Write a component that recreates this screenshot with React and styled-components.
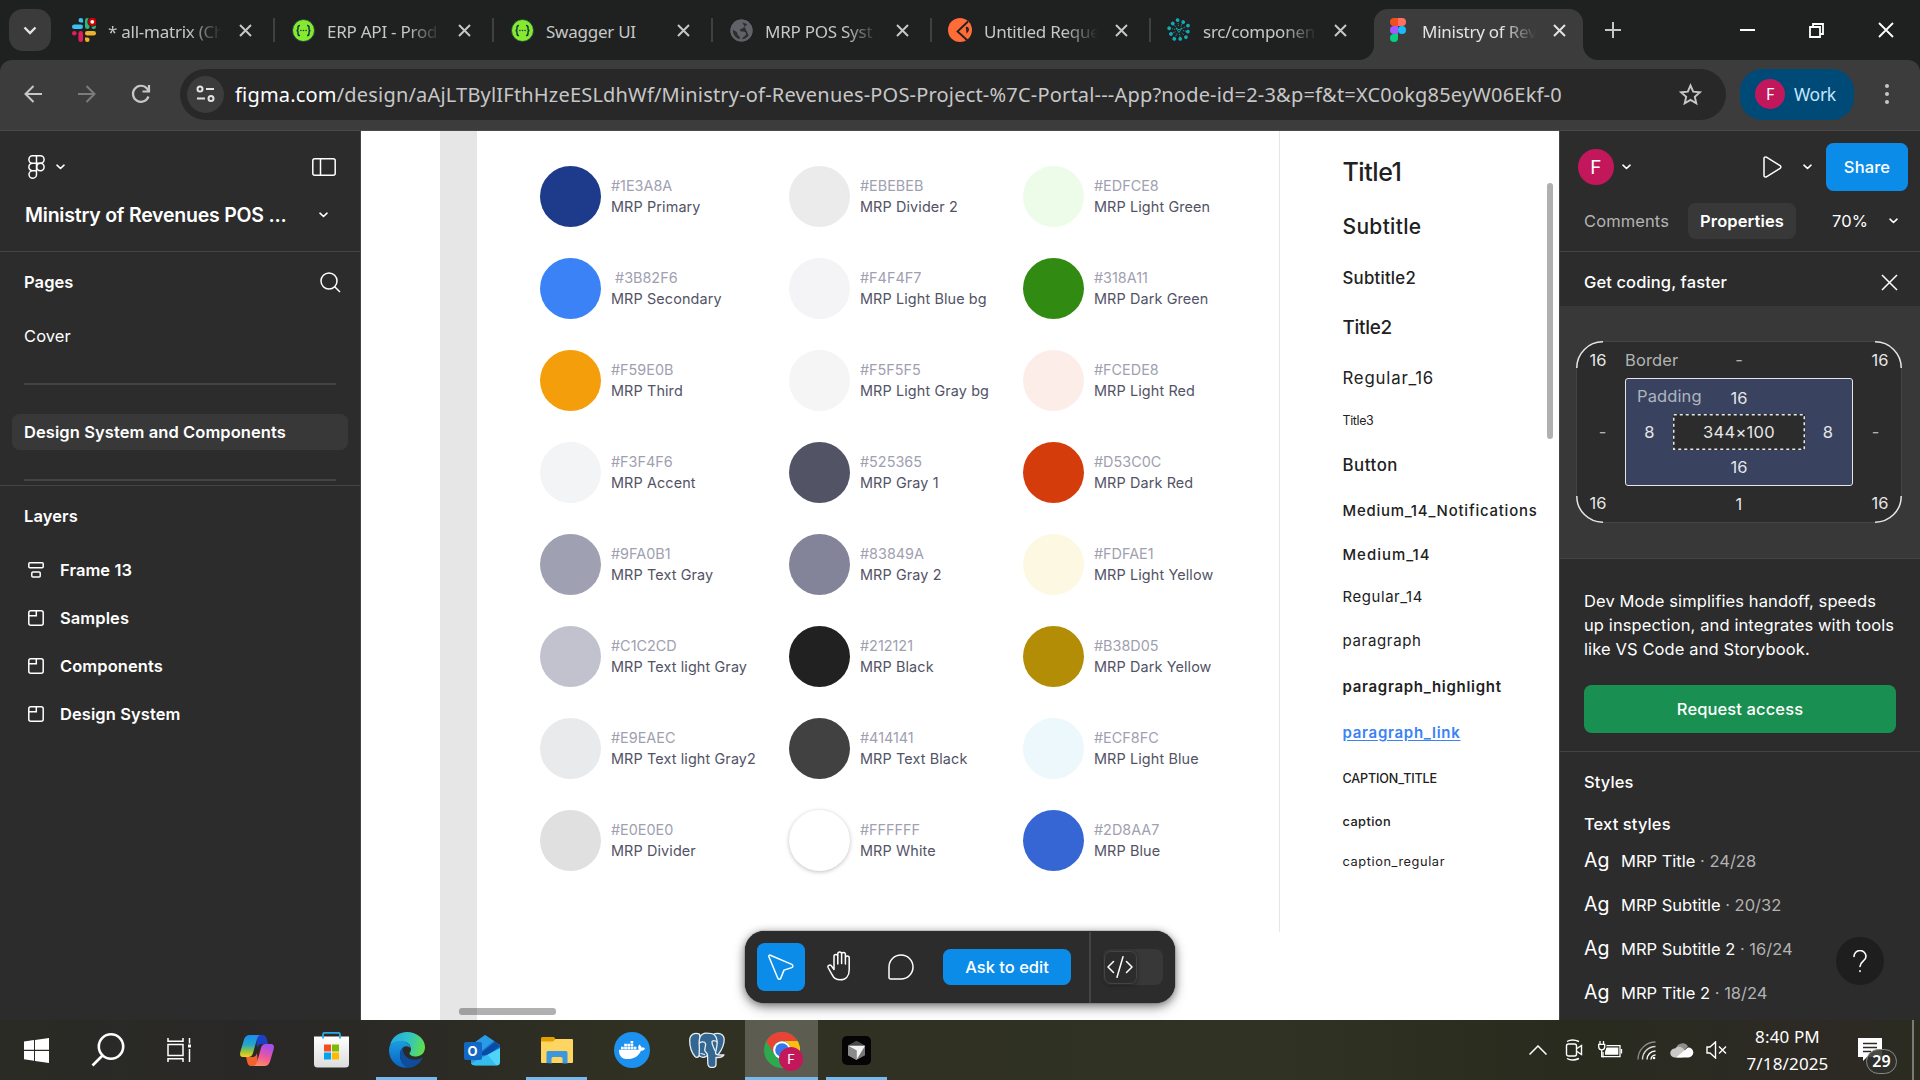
import React from "react";
import styled, { createGlobalStyle, css } from "styled-components";
import { FaDocker } from "react-icons/fa";

const GlobalStyle = createGlobalStyle`
  * { box-sizing: border-box; }
  html, body { margin: 0; padding: 0; }
  body { width: 1920px; height: 1080px; overflow: hidden; background: #2c2c2c; }
  svg { display: block; flex: none; }
`;

const UI = `Inter, "Liberation Sans", sans-serif`;
const CHROME = `"Noto Sans", "Open Sans", sans-serif`;

const Screen = styled.div`
  width: 1920px;
  height: 1080px;
  display: flex;
  flex-direction: column;
  overflow: hidden;
  font-family: ${UI};
`;

/* ---------- browser ---------- */
const TabStrip = styled.div`
  height: 60px;
  flex: none;
  display: flex;
  align-items: flex-start;
  padding: 9px 0 0 9px;
  background: #1f2020;
  font-family: ${CHROME};
`;
const TabSearch = styled.div`
  width: 42px;
  height: 42px;
  border-radius: 14px;
  background: #3b3b3b;
  display: grid;
  place-items: center;
  margin-right: 9px;
`;
const Tab = styled.div`
  position: relative;
  width: 209px;
  height: 51px;
  padding: 0 16px 9px 12px;
  display: flex;
  align-items: center;
  border-radius: 14px 14px 0 0;
  background: ${(p) => (p.$active ? "#3c3c3c" : "transparent")};
  ${(p) =>
    p.$active &&
    css`
      &::before,
      &::after {
        content: "";
        position: absolute;
        bottom: 0;
        width: 15px;
        height: 15px;
      }
      &::before {
        left: -15px;
        background: radial-gradient(circle at 0 0, transparent 14.5px, #3c3c3c 15.5px);
      }
      &::after {
        right: -15px;
        background: radial-gradient(circle at 100% 0, transparent 14.5px, #3c3c3c 15.5px);
      }
    `}
`;
const Favicon = styled.div`
  width: 24px;
  height: 24px;
  display: grid;
  place-items: center;
`;
const TabTitle = styled.div`
  width: 116px;
  margin: 3px 0 0 12px;
  white-space: nowrap;
  font-size: 17px;
  line-height: 26px;
  letter-spacing: -0.25px;
  color: ${(p) => (p.$active ? "#e3e3e3" : "#c7c7c7")};
  mask-image: ${(p) => (p.$whole ? "none" : "linear-gradient(90deg, #000 80px, transparent 114px)")};
`;
const TabClose = styled.div`
  margin-left: 15px;
`;
const TabGap = styled.div`
  width: 10px;
  height: 42px;
  display: grid;
  place-items: center;
  &::before {
    content: "";
    width: 2px;
    height: 24px;
    background: ${(p) => (p.$line ? "#3f4040" : "transparent")};
  }
`;
const NewTab = styled.div`
  width: 42px;
  height: 42px;
  margin-left: -1px;
  display: grid;
  place-items: center;
`;
const WindowButtons = styled.div`
  margin-left: auto;
  height: 42px;
  display: flex;
  align-items: center;
  & > * {
    width: 69px;
    display: grid;
    place-items: center;
  }
`;
const AddressRowBack = styled.div`
  background: #1f2020;
  flex: none;
`;
const AddressRow = styled.div`
  height: 71px;
  display: flex;
  align-items: center;
  padding: 0 22px 2px 18px;
  background: #3c3c3c;
  border-bottom: 1px solid #4a4a4a;
  border-radius: 12px 12px 0 0;
  font-family: ${CHROME};
`;
const NavButton = styled.div`
  width: 54px;
  padding-left: 4px;
`;
const AddressField = styled.div`
  width: 1546px;
  height: 51px;
  border-radius: 26px;
  background: #282828;
  display: flex;
  align-items: center;
  padding: 0 24px 0 7px;
`;
const SiteInfo = styled.div`
  width: 37px;
  height: 37px;
  border-radius: 50%;
  background: #3c3c3c;
  display: grid;
  place-items: center;
`;
const Url = styled.div`
  flex: 1;
  margin-left: 11px;
  font-size: 20px;
  letter-spacing: 0.19px;
  white-space: nowrap;
  color: #c7c7c7;
  span {
    color: #fff;
  }
`;
const ProfilePill = styled.div`
  width: 114px;
  height: 51px;
  margin-left: 14px;
  border-radius: 22px;
  background: #004a77;
  display: flex;
  align-items: center;
  gap: 9px;
  padding-left: 15px;
  color: #c2e7ff;
  font-size: 17.5px;
  letter-spacing: -0.3px;
`;
const Avatar = styled.div`
  width: ${(p) => p.$size}px;
  height: ${(p) => p.$size}px;
  flex: none;
  border-radius: 50%;
  background: #c2185b;
  color: #fff;
  display: grid;
  place-items: center;
  font: 400 ${(p) => p.$font}px/1 ${(p) => p.$family || UI};
`;
const Dots = styled.div`
  margin-left: auto;
  width: 22px;
  display: flex;
  flex-direction: column;
  align-items: center;
  gap: 4px;
  i {
    width: 4px;
    height: 4px;
    border-radius: 50%;
    background: #c7c7c7;
  }
`;

/* ---------- workspace ---------- */
const Workspace = styled.div`
  height: 889px;
  flex: none;
  display: flex;
  background: #fff;
`;
const LeftPanel = styled.aside`
  width: 361px;
  background: #2c2c2c;
  border-right: 1px solid #444;
  color: #fff;
  font-size: 16.5px;
  letter-spacing: 0.08px;
`;
const FileHeader = styled.div`
  height: 121px;
  border-bottom: 1px solid #444;
  padding: 13px 0 0 24px;
`;
const FileTools = styled.div`
  height: 46px;
  display: flex;
  align-items: center;
  padding: 0 24px 0 4px;
  gap: 10.5px;
  svg:last-child {
    margin-left: auto;
  }
`;
const FileName = styled.div`
  height: 50px;
  padding: 0 32px 0 1px;
  display: flex;
  align-items: center;
  justify-content: space-between;
  font-size: 19.5px;
  font-weight: 600;
  letter-spacing: -0.22px;
`;
const PagesSection = styled.div`
  height: 234px;
  border-bottom: 1px solid #444;
  padding: 12px 12px 0;
`;
const SectionTitle = styled.div`
  height: 36px;
  padding: 0 7px 0 12px;
  display: flex;
  align-items: center;
  justify-content: space-between;
  font-weight: 600;
`;
const PageItem = styled.div`
  height: 36px;
  margin-top: ${(p) => p.$top}px;
  padding-left: 12px;
  display: flex;
  align-items: center;
  border-radius: 7.5px;
  background: ${(p) => (p.$selected ? "#383838" : "transparent")};
  font-weight: ${(p) => (p.$selected ? 600 : 400)};
`;
const PageDivider = styled.div`
  height: 2px;
  margin: 29px 12px;
  background: #444;
`;
const LayersSection = styled.div`
  padding: 12px;
`;
const LayerList = styled.div`
  padding-top: 12px;
`;
const LayerRow = styled.div`
  height: 48px;
  display: flex;
  align-items: center;
  gap: 16px;
  padding-left: 16px;
  font-weight: 600;
`;

const Canvas = styled.main`
  position: relative;
  width: 1198px;
  display: flex;
  background: #fff;
`;
const FrameEdge = styled.div`
  width: 37.5px;
  margin-left: 78.5px;
  background: #e6e6e6;
`;
const Swatches = styled.div`
  width: 803px;
  height: 801px;
  padding: 35px 0 0 62.5px;
  border-right: 1px solid #e6e6e6;
  display: grid;
  grid-template-columns: 249px 234px 230px;
  grid-template-rows: repeat(8, 92px);
`;
const Swatch = styled.div`
  display: flex;
  gap: 10.5px;
  white-space: nowrap;
`;
const Disc = styled.div`
  width: 61px;
  height: 61px;
  flex: none;
  border-radius: 50%;
  background: ${(p) => p.$color};
  box-shadow: ${(p) => (p.$raised ? "0 1px 4px rgba(0,0,0,0.25)" : "none")};
`;
const SwatchText = styled.div`
  padding-top: 10px;
  font-size: 14.4px;
  line-height: 20.5px;
  letter-spacing: 0.12px;
  color: #525365;
`;
const Hex = styled.div`
  color: #9fa0b1;
  letter-spacing: 0;
  white-space: pre;
`;
const TypeColumn = styled.div`
  padding: 31px 0 0 62.5px;
  color: #212121;
  white-space: nowrap;
`;
const TypeSample = styled.div`
  height: 20px;
  width: max-content;
  line-height: 20px;
  margin-top: ${(p) => p.$top}px;
  font-size: ${(p) => p.$size}px;
  font-weight: ${(p) => p.$weight};
  letter-spacing: ${(p) => p.$ls}px;
  ${(p) =>
    p.$link &&
    css`
      color: #3b82f6;
      text-decoration: underline;
      text-underline-offset: 2px;
    `}
`;
const Thumb = styled.div`
  position: absolute;
  border-radius: 3px;
  background: rgba(0, 0, 0, 0.31);
`;
const VThumb = styled(Thumb)`
  right: 6px;
  top: 52px;
  width: 6px;
  height: 256px;
`;
const HThumb = styled(Thumb)`
  left: 98px;
  bottom: 5px;
  width: 97px;
  height: 7px;
`;
const Toolbar = styled.div`
  position: absolute;
  left: 384px;
  top: 800px;
  width: 430px;
  height: 72px;
  border-radius: 19.5px;
  background: #2c2c2c;
  box-shadow: 0 2px 8px rgba(0, 0, 0, 0.45), 0 5px 14px rgba(0, 0, 0, 0.25), 0 0 1px #000;
  display: flex;
  align-items: center;
  padding-left: 12px;
  color: #fff;
`;
const Tool = styled.div`
  width: 48px;
  height: 48px;
  margin-right: 12px;
  border-radius: 7.5px;
  background: ${(p) => (p.$active ? "#0c8ce9" : "transparent")};
  display: grid;
  place-items: center;
`;
const AskButton = styled.div`
  width: 128px;
  height: 36px;
  margin-left: 6px;
  border-radius: 7.5px;
  background: #0c8ce9;
  display: grid;
  place-items: center;
  font-size: 16.5px;
  font-weight: 550;
`;
const ToolbarDivider = styled.div`
  width: 2px;
  height: 71px;
  margin: 0 12px 0 18px;
  background: #444;
`;
const DevToggle = styled.div`
  width: 60px;
  height: 36px;
  border-radius: 7.5px;
  background: #383838;
  padding: 1.5px;
`;
const DevKnob = styled.div`
  width: 33px;
  height: 33px;
  margin-left: -1px;
  border-radius: 7px;
  background: #2c2c2c;
  border: 1px solid #444;
  box-shadow: 0 1px 4px rgba(0, 0, 0, 0.35);
  display: grid;
  place-items: center;
`;

const RightPanel = styled.aside`
  position: relative;
  width: 361px;
  background: #2c2c2c;
  border-left: 1px solid #444;
  color: #fff;
  font-size: 16.5px;
  letter-spacing: 0.11px;
  overflow: hidden;
`;
const RightHeader = styled.div`
  height: 121px;
  border-bottom: 1px solid #444;
  padding: 12px 12px 0 18px;
`;
const UserRow = styled.div`
  height: 48px;
  display: flex;
  align-items: center;
`;
const UserMenu = styled.div`
  flex: 1;
  display: flex;
  align-items: center;
  gap: 8px;
`;
const PlayMenu = styled.div`
  display: flex;
  align-items: center;
  gap: 21px;
  margin-right: 14px;
`;
const ShareButton = styled.div`
  width: 82px;
  height: 48px;
  border-radius: 7.5px;
  background: #0c8ce9;
  display: grid;
  place-items: center;
  font-weight: 550;
`;
const ModeRow = styled.div`
  height: 36px;
  margin-top: 12px;
  display: flex;
  align-items: center;
`;
const Mode = styled.div`
  width: ${(p) => p.$width}px;
  height: 36px;
  padding-right: ${(p) => (p.$active ? 0 : 13)}px;
  border-radius: 7.5px;
  display: grid;
  place-items: center;
  background: ${(p) => (p.$active ? "#383838" : "transparent")};
  color: ${(p) => (p.$active ? "#fff" : "#b3b3b3")};
  font-weight: ${(p) => (p.$active ? 600 : 400)};
`;
const Zoom = styled.div`
  margin-left: 36px;
  display: flex;
  align-items: center;
  gap: 21px;
`;
const PromoHeader = styled.div`
  height: 54px;
  padding: 6px 22px 0 24px;
  display: flex;
  align-items: center;
  justify-content: space-between;
  font-weight: 550;
`;
const PromoArt = styled.div`
  height: 253px;
  background: #383838;
  border-bottom: 1px solid #444;
  padding: 35px 0 0 16px;
`;
const BorderBox = styled.div`
  position: relative;
  width: 326px;
  height: 182px;
  border: 1px solid #444;
  border-radius: 27px;
  background: #2c2c2c;
  display: grid;
  grid-template-columns: 48px 228px 48px;
  grid-template-rows: 36px 108px 36px;
  align-items: center;
  color: #e6e6e6;
`;
const CornerMarks = styled.svg`
  position: absolute;
  left: -1px;
  top: -1px;
`;
const BoxCell = styled.div`
  text-align: center;
  padding: ${(p) => p.$pad || "0"};
  color: ${(p) => (p.$muted ? "#b3b3b3" : "inherit")};
`;
const EdgeLabel = styled.div`
  display: grid;
  grid-template-columns: 1fr auto 1fr;
  color: #b3b3b3;
`;
const PaddingBox = styled.div`
  width: 228px;
  height: 108px;
  border: 1.5px solid #e6e6e6;
  border-radius: 3px;
  background: #394360;
  display: grid;
  grid-template-rows: 35px 36px 34px;
  align-items: center;
`;
const PaddingTop = styled(EdgeLabel)`
  padding: 0 0 0 11px;
  color: #b0b4bf;
  b {
    font-weight: 400;
    color: #e6e6e6;
    margin: 2px 0 0 -11px;
  }
`;
const PaddingMiddle = styled.div`
  display: grid;
  grid-template-columns: 47px 132px 46px;
  align-items: center;
  text-align: center;
`;
const ContentBox = styled.div`
  position: relative;
  height: 36px;
  line-height: 36px;
  letter-spacing: 0.3px;
  background: #2c2c2c;
`;
const DashedOutline = styled.svg`
  position: absolute;
  inset: 0;
`;
const Promo = styled.div`
  height: 193px;
  border-bottom: 1px solid #444;
  padding: 30px 24px 0 24px;
  line-height: 24px;
`;
const PromoText = styled.div`
  white-space: nowrap;
`;
const RequestButton = styled.div`
  height: 48px;
  margin-top: 24px;
  border-radius: 7.5px;
  background: #198f51;
  display: grid;
  place-items: center;
  font-weight: 500;
`;
const StylesSection = styled.div`
  padding: 18px 24px 0;
`;
const StylesTitle = styled.div`
  height: ${(p) => p.$height}px;
  line-height: 24px;
  font-weight: 550;
`;
const StyleRow = styled.div`
  height: 44px;
  display: flex;
  align-items: center;
  color: #fff;
  letter-spacing: 0;
  span {
    color: #b3b3b3;
  }
`;
const Ag = styled.div`
  width: 37px;
  margin-top: -3px;
  font-size: 19.5px;
`;
const Help = styled.div`
  position: absolute;
  right: 36px;
  top: 806px;
  width: 48px;
  height: 48px;
  border-radius: 50%;
  background: #1e1e1e;
  display: grid;
  place-items: center;
`;

/* ---------- taskbar ---------- */
const Taskbar = styled.div`
  height: 60px;
  flex: none;
  display: flex;
  background: linear-gradient(90deg, #292b24 0, #2a2827 240px, #2b2a25 420px, #303122 640px, #303223 1280px, #292b1e 1560px, #2d2a25 1830px, #2b2b20 1920px);
  color: #fff;
  font-family: ${CHROME};
`;
const SystemItem = styled.div`
  width: ${(p) => p.$width}px;
  display: grid;
  place-items: center;
`;
const AppItem = styled.div`
  position: relative;
  width: 75px;
  display: grid;
  place-items: center;
  ${(p) =>
    p.$open &&
    css`
      &::after {
        content: "";
        position: absolute;
        left: ${p.$active ? 1 : 7}px;
        right: ${p.$active ? 1 : 7}px;
        bottom: 0;
        height: 3px;
        background: #76b9ed;
      }
    `}
  ${(p) =>
    p.$active &&
    css`
      background: linear-gradient(90deg, transparent 1px, #5c5d50 1px 74px, transparent 74px);
    `}
`;
const ChromeBadge = styled.div`
  position: absolute;
  left: 35px;
  top: 27px;
`;
const Tray = styled.div`
  margin-left: auto;
  height: 60px;
  display: flex;
  align-items: center;
`;
const TrayIcon = styled.div`
  width: ${(p) => p.$width || 36}px;
  display: grid;
  place-items: center;
`;
const Clock = styled.div`
  width: 112px;
  padding-right: 1px;
  font-size: 17px;
  line-height: 27px;
  letter-spacing: 0.14px;
  text-align: center;
`;
const Notifications = styled.div`
  width: 68px;
  height: 60px;
  padding: 18px 0 0 14px;
  position: relative;
`;
const Count = styled.div`
  position: absolute;
  left: 22px;
  top: 29px;
  width: 31px;
  height: 25px;
  border: 1px solid #8a8a85;
  border-radius: 13px;
  background: rgba(48, 48, 44, 0.88);
  font-size: 16px;
  font-weight: 600;
  line-height: 23px;
  text-align: center;
`;
const PeekLine = styled.div`
  width: 8px;
  height: 60px;
  border-left: 2px solid #7b7b76;
`;

/* ---------- icons ---------- */
const Icon = ({ w, h = w, vb, color = "#fff", sw = 1.5, children, ...rest }) => (
  <svg width={w} height={h} viewBox={vb || `0 0 ${w} ${h}`} fill="none" stroke={color} strokeWidth={sw} {...rest}>
    {children}
  </svg>
);
const Chevron = ({ w = 9, sw = 1.6 }) => (
  <Icon w={w} h={6} vb="0 0 9 6" sw={sw} strokeLinecap="round" strokeLinejoin="round">
    <path d="M1 1.2l3.5 3.3L8 1.2" />
  </Icon>
);
const CloseMark = ({ color = "#c7c7c7" }) => (
  <Icon w={13} color={color} sw={2}>
    <path d="M1 1l11 11M12 1L1 12" />
  </Icon>
);
const FigmaColor = () => (
  <svg width="16" height="24" viewBox="0 0 16 24">
    <path d="M4 0h4v8H4a4 4 0 010-8z" fill="#f24e1e" />
    <path d="M8 0h4a4 4 0 010 8H8z" fill="#ff7262" />
    <path d="M4 8h4v8H4a4 4 0 010-8z" fill="#a259ff" />
    <circle cx="12" cy="12" r="4" fill="#1abcfe" />
    <path d="M4 16h4v4a4 4 0 11-4-4z" fill="#0acf83" />
  </svg>
);
const Slack = () => (
  <svg width="24" height="24" viewBox="0 0 24 24">
    <g fill="#36c5f0">
      <rect x="0" y="6.4" width="11" height="4.6" rx="2.3" />
      <path d="M8.8 0a2.3 2.3 0 012.3 2.3v2.3H8.8a2.3 2.3 0 010-4.6z" />
    </g>
    <g fill="#2eb67d">
      <rect x="13" y="0" width="4.6" height="11" rx="2.3" />
      <path d="M24 8.8a2.3 2.3 0 01-4.6 0V6.5h2.3a2.3 2.3 0 012.3 2.3z" />
    </g>
    <g fill="#ecb22e">
      <rect x="13" y="13" width="11" height="4.6" rx="2.3" />
      <path d="M15.3 24a2.3 2.3 0 01-2.3-2.3v-2.3h2.3a2.3 2.3 0 010 4.6z" />
    </g>
    <g fill="#e01e5a">
      <rect x="6.4" y="13" width="4.6" height="11" rx="2.3" />
      <path d="M0 15.3a2.3 2.3 0 014.6 0 2.3 2.3 0 11-4.6 0z" />
    </g>
    <circle cx="20.3" cy="3.8" r="4.9" fill="#1f2020" />
    <circle cx="20.3" cy="3.8" r="3" fill="#fff" stroke="#d40000" strokeWidth="2.2" />
  </svg>
);
const Swagger = () => (
  <svg width="23" height="23" viewBox="0 0 23 23">
    <circle cx="11.5" cy="11.5" r="11" fill="#85ea2d" stroke="#173647" strokeWidth=".8" />
    <path
      d="M8 6.5c-1.500 0-2 .6-2 1.800v1.600c0 1-.5 1.600-1.500 1.600 1 0 1.500.6 1.500 1.600v1.600c0 1.200.5 1.800 2 1.800M15 6.500c1.500 0 2 .6 2 1.800v1.600c0 1 .5 1.600 1.500 1.600-1 0-1.500.6-1.500 1.600v1.600c0 1.200-.5 1.800-2 1.800"
      fill="none"
      stroke="#173647"
      strokeWidth="1.5"
    />
    <g fill="#173647">
      <circle cx="8.9" cy="11.5" r=".8" />
      <circle cx="11.5" cy="11.5" r=".8" />
      <circle cx="14.1" cy="11.5" r=".8" />
    </g>
  </svg>
);
const Globe = () => (
  <svg width="23" height="23" viewBox="0 0 23 23">
    <circle cx="11.5" cy="11.5" r="11" fill="#5f6368" />
    <path d="M12 2.500c1 1.500 3 2 4.500 2 1 1.500 0 2.500-1.500 2.500-1.500.5-1 2-2.500 2.500-1.500.2-2.500.5-2.500 1.500s1 1.500 3 1.500 3 1 3 2.500-1.500 2-2.500 3-1.500 2.500-3 2.800c-1-.8-.5-2.300-1-3.300s-2-1-2-2.500-1-2.500-2.500-3L2.500 10.500c.3 2-.2 5 1.500 7A11 11 0 0011 21c3-.2 6-1 8-4" fill="#1f2020" opacity=".8" />
    <circle cx="11.5" cy="11.5" r="9.900" fill="none" stroke="#5f6368" strokeWidth="2.400" />
  </svg>
);
const Postman = () => (
  <svg width="24" height="24" viewBox="0 0 24 24">
    <circle cx="12" cy="12" r="12" fill="#ff6c37" />
    <path d="M20 3.5L9.500 13.500l4 3.500 6.500 6" stroke="#1f2020" strokeWidth="1.800" fill="none" />
    <path d="M18.500 9.500c2.200 0 2.400 3 .6 4.600z" stroke="#1f2020" strokeWidth="1.300" fill="none" />
  </svg>
);
const Radial = () => (
  <svg width="24" height="24" viewBox="0 0 24 24" fill="#13aab5" stroke="#13aab5">
    {[0, 36, 72, 108, 144, 180, 216, 252, 288, 324].map((a, i) => (
      <g key={a} transform={`rotate(${a - 8} 12 12)`}>
        <circle cx="12" cy={i % 2 ? 3 : 2} r="1.9" stroke="none" />
        <path d="M12 5v3.5" strokeWidth=".8" strokeDasharray="1.2 .7" />
      </g>
    ))}
    <path d="M9 10l3 4.500L15 10l-3 1.800z" strokeWidth=".9" fill="none" />
  </svg>
);
const FigmaOutline = () => (
  <Icon w={17} h={24}>
    <path d="M8.500 .8H4.600a3.700 3.700 0 000 7.400h3.900zM8.500 .8h3.900a3.700 3.700 0 010 7.400H8.500zM8.500 8.200H4.600a3.700 3.700 0 000 7.500h3.900zM8.500 15.700H4.600a3.750 3.750 0 103.900 3.700z" />
    <circle cx="12.4" cy="12" r="3.7" />
  </Icon>
);
const FrameIcon = () => (
  <Icon w={16}>
    <rect x=".8" y=".8" width="14.4" height="14.4" rx="2" />
    <path d="M1 5.800h7.300V1" />
  </Icon>
);
const AutoLayoutIcon = () => (
  <Icon w={16}>
    <rect x=".8" y=".8" width="14.4" height="5" rx="1" />
    <rect x="3.8" y="10" width="8.4" height="5" rx="1" />
  </Icon>
);
const EdgeLogo = () => (
  <svg width="36" height="36" viewBox="0 0 36 36">
    <defs>
      <linearGradient id="edgeTop" x1="0" y1=".3" x2="1" y2=".5">
        <stop offset="0" stopColor="#2aa5e0" />
        <stop offset=".5" stopColor="#2fc2c9" />
        <stop offset="1" stopColor="#5fe04a" />
      </linearGradient>
      <linearGradient id="edgeLow" x1="0" y1="0" x2="0" y2="1">
        <stop offset="0" stopColor="#1b9de2" />
        <stop offset="1" stopColor="#0a62c0" />
      </linearGradient>
    </defs>
    <path d="M1 13C3 5 10 0 18 0c10 0 18 7 18 15 0 6-4 9.500-9 9.500-4 0-6.500-1.500-6.500-3 0-1 1.500-1.500 1.500-4.500C22 13 18.500 9.500 13 9.500 7 9.500 2 12 1 13z" fill="url(#edgeTop)" />
    <path d="M.5 14.500C2 11 6 9 11 9c6 0 10.500 3.500 10.800 7.500-1-1.500-3-2.500-5-2.200-3.600.5-6.300 5-5.800 10.200.5 5.500 4 9.500 8.500 11.200C9 37 0 29 0 18.500c0-1.500.2-2.800.5-4z" fill="url(#edgeLow)" />
    <path d="M14 15.500c-2.500 2-3.500 5.500-3 9 .5 5.500 4 10 9 11.300 5.500-.5 10.500-4 13.200-8.800.5-.9-.2-1.300-1-.8-7.700 4-19.500-.2-18.200-10.700z" fill="#0f4c9c" />
  </svg>
);
const CopilotLogo = () => (
  <svg width="34" height="31" viewBox="0 0 34 31">
    <defs>
      <linearGradient id="copL" x1="0" y1="0" x2="0" y2="1">
        <stop offset="0" stopColor="#1b8cf0" />
        <stop offset=".45" stopColor="#22a8c8" />
        <stop offset=".75" stopColor="#9bc53a" />
        <stop offset="1" stopColor="#f8d21f" />
      </linearGradient>
      <linearGradient id="copR" x1=".3" y1="0" x2="0" y2="1">
        <stop offset="0" stopColor="#a94ee8" />
        <stop offset=".5" stopColor="#f0589b" />
        <stop offset="1" stopColor="#ff9a52" />
      </linearGradient>
    </defs>
    <path d="M16 0h7c2 0 3 1.500 3.500 3l1.500 6h-6c-3 0-4 1-5 4z" fill="#1c3fc4" />
    <path d="M18 31h-7c-2 0-3-1.500-3.500-3L6 22h6c3 0 4-1 5-4z" fill="#f2622e" />
    <path d="M9.500 0H20c-2 1-2.700 3-3.300 5L13 18c-.8 2.500-2 4-5 4H3C0 22-.3 19.500.3 17L4 4.500C5 1.500 7 0 9.500 0z" fill="url(#copL)" />
    <path d="M24.500 31H14c2-1 2.700-3 3.300-5L21 13c.8-2.500 2-4 5-4h5c3 0 3.300 2.500 2.700 5L30 26.500c-1 3-3 4.500-5.500 4.500z" fill="url(#copR)" />
  </svg>
);
const StoreLogo = () => (
  <svg width="35" height="36" viewBox="0 0 35 36">
    <defs>
      <linearGradient id="bag" x1="0" y1="0" x2="0" y2="1">
        <stop offset="0" stopColor="#fff" />
        <stop offset="1" stopColor="#dcdcdc" />
      </linearGradient>
    </defs>
    <path d="M0 4.500h35V32a3.500 3.500 0 01-3.500 3.500h-28A3.500 3.500 0 010 32z" fill="url(#bag)" />
    <path d="M9 6.500V2.500A1.800 1.800 0 0110.800 .8h13.400A1.800 1.800 0 0126 2.500v4" fill="none" stroke="#2aa8e8" strokeWidth="1.8" />
    <path d="M10 12.500h7v7h-7z" fill="#f25022" />
    <path d="M18 12.500h7v7h-7z" fill="#7fba00" />
    <path d="M10 20.500h7v7h-7z" fill="#00a4ef" />
    <path d="M18 20.500h7v7h-7z" fill="#ffb900" />
  </svg>
);
const OutlookMark = styled.div`
  position: relative;
  display: grid;
`;
const OutlookLetter = styled.div`
  position: absolute;
  left: 0;
  top: 7px;
  width: 18px;
  height: 18px;
  border-radius: 2px;
  background: #1268c4;
  color: #fff;
  font: 700 13px/18px ${UI};
  text-align: center;
`;
const OutlookLogo = () => (
  <OutlookMark>
    <svg width="36" height="31" viewBox="0 0 36 31">
      <path d="M7 11L21 0l15 10v16a4 4 0 01-4 4H11a4 4 0 01-4-4z" fill="#1470c8" />
      <path d="M7 10L21 0l9 6-15 12z" fill="#2b9be6" />
      <path d="M17 18L31 7l5 4-16 12z" fill="#0a4aa8" />
      <path d="M36 13v14a3.500 3.500 0 01-3.500 3.500H11c-1.500 0-3-.8-4-2z" fill="#4fd4f8" />
      <path d="M7 22l17-2 8 10H10a3 3 0 01-3-3z" fill="#2ab4ee" opacity=".7" />
    </svg>
    <OutlookLetter>O</OutlookLetter>
  </OutlookMark>
);
const ExplorerLogo = () => (
  <svg width="32" height="27" viewBox="0 0 32 27">
    <path d="M0 1.500A1.500 1.500 0 011.500 0H13l2 3-2 2H0z" fill="#e0a000" />
    <path d="M0 4.500h12l2.500-2.500H31a1 1 0 011 1v22a1 1 0 01-1 1H1a1 1 0 01-1-1z" fill="#ffd562" />
    <path d="M5.500 26V15.500A1.500 1.500 0 017 14h18a1.500 1.500 0 011.500 1.500V26.500h-5v-5a1.500 1.500 0 00-1.500-1.500h-8a1.500 1.500 0 00-1.500 1.500v5z" fill="#3c97dd" />
  </svg>
);
const DockerMark = styled.div`
  width: 36px;
  height: 36px;
  border-radius: 50%;
  background: #1d91ef;
  display: grid;
  place-items: center;
`;
const PostgresLogo = () => (
  <svg width="36" height="36" viewBox="0 0 36 36" fill="#336791" stroke="#e9eef2" strokeWidth="1.3" strokeLinejoin="round" strokeLinecap="round">
    <path d="M24 2.500C28 .3 34 1 35 6c.8 5-2 12-5.500 16-1.500 1.500-3 1-3.500 0z" />
    <path d="M10.500 2.200C6 .2.800 2 .7 8.500.7 14 3 21 6 24.500c1.500 1.500 3 .8 4-.5l3-4z" />
    <path d="M10.500 24c-1-3 .3-5-.2-9.500C9.800 8 10 1.200 17.500 1.200S27 3 28 8.500c.7 5-1 9-1.500 12.500 0 1.500 1.500 2 4.500 2 1.500 0 3.500-.2 4-.2-1 1.600-3.500 2.700-6 2.700l-2-.2v7c0 2.200-1.500 3.200-4 3.200-3 0-4-1.500-4.200-4L18.500 23c-1.500 2.500-5 3.200-8 1z" />
    <path d="M10.500 11c2-1.500 5-1.500 6 .5.7 2.500-1.500 5-.5 7.500.7 1.500 2.500 2 2.500 4M23 9.500c1.200-1 3.500-1 4.700.2M23 9.500c-.5 3 1.500 5.500 3.200 9.500M12 21.500l3.500 1" fill="none" />
  </svg>
);
const ChromeLogo = () => (
  <svg width="36" height="36" viewBox="0 0 36 36">
    <circle cx="18" cy="18" r="18" fill="#2da94f" />
    <path d="M2.400 9A18 18 0 0133.600 9H18a9 9 0 00-7.800 13.500z" fill="#ea4335" />
    <path d="M33.600 9A18 18 0 0118 36l7.800-13.500A9 9 0 0025.800 13.500 9 9 0 0018 9z" fill="#fdbd12" />
    <circle cx="18" cy="18" r="8.8" fill="#fff" />
    <circle cx="18" cy="18" r="6.8" fill="#3477ea" />
  </svg>
);
const CursorLogo = () => (
  <svg width="29" height="29" viewBox="0 0 29 29">
    <rect width="29" height="29" rx="5" fill="#050505" />
    <path d="M14.500 5L23 9.700v9.600L14.500 24 6 19.300V9.700z" fill="#777" />
    <path d="M6 9.700L14.500 5 23 9.700z" fill="#4a4a4a" />
    <path d="M6 9.700h17L14.500 24v-9.500z" fill="#f2f2f2" />
    <path d="M6 9.700l8.500 4.800V24L6 19.300z" fill="#8a8a8a" />
  </svg>
);

/* ---------- data ---------- */
const tabs = [
  { title: "* all-matrix (Ch", icon: <Slack /> },
  { title: "ERP API - Prod", icon: <Swagger /> },
  { title: "Swagger UI", icon: <Swagger />, whole: true },
  { title: "MRP POS Syst", icon: <Globe /> },
  { title: "Untitled Reque", icon: <Postman /> },
  { title: "src/componen", icon: <Radial /> },
  { title: "Ministry of Rev", icon: <FigmaColor />, active: true },
];

const swatches = [
  ["#1E3A8A", "MRP Primary"], ["#EBEBEB", "MRP Divider 2"], ["#EDFCE8", "MRP Light Green"],
  ["#3B82F6", "MRP Secondary", " #3B82F6"], ["#F4F4F7", "MRP Light Blue bg"], ["#318A11", "MRP Dark Green"],
  ["#F59E0B", "MRP Third"], ["#F5F5F5", "MRP Light Gray bg"], ["#FCEDE8", "MRP Light Red"],
  ["#F3F4F6", "MRP Accent"], ["#525365", "MRP Gray 1"], ["#D53C0C", "MRP Dark Red"],
  ["#9FA0B1", "MRP Text Gray"], ["#83849A", "MRP Gray 2"], ["#FDFAE1", "MRP Light Yellow"],
  ["#C1C2CD", "MRP Text light Gray"], ["#212121", "MRP Black"], ["#B38D05", "MRP Dark Yellow"],
  ["#E9EAEC", "MRP Text light Gray2"], ["#414141", "MRP Text Black"], ["#ECF8FC", "MRP Light Blue"],
  ["#E0E0E0", "MRP Divider"], ["#FFFFFF", "MRP White"], ["#2D8AA7", "MRP Blue"],
];
const discColor = { "#2D8AA7": "#3566d3", "#FDFAE1": "#fdf8e1" };

const typeSamples = [
  { text: "Title1", size: 25, weight: 500, top: 0, ls: -0.45 },
  { text: "Subtitle", size: 21, weight: 500, top: 35, ls: 0.32 },
  { text: "Subtitle2", size: 16.8, weight: 500, top: 31, ls: 0.23 },
  { text: "Title2", size: 18.9, weight: 500, top: 30, ls: -0.26 },
  { text: "Regular_16", size: 16.8, weight: 400, top: 30, ls: 0.81 },
  { text: "Title3", size: 12.4, weight: 400, top: 23, ls: -0.35 },
  { text: "Button", size: 16.8, weight: 500, top: 24, ls: 0.56 },
  { text: "Medium_14_Notifications", size: 14.9, weight: 500, top: 26, ls: 0.8 },
  { text: "Medium_14", size: 14.9, weight: 500, top: 24, ls: 1.03 },
  { text: "Regular_14", size: 14.9, weight: 400, top: 22, ls: 0.61 },
  { text: "paragraph", size: 15, weight: 400, top: 24, ls: 0.66 },
  { text: "paragraph_highlight", size: 15, weight: 600, top: 26, ls: 0.7 },
  { text: "paragraph_link", size: 15, weight: 600, top: 26, ls: 0.71, link: true },
  { text: "CAPTION_TITLE", size: 12.6, weight: 500, top: 26, ls: -0.16 },
  { text: "caption", size: 12.8, weight: 500, top: 23, ls: 0.4 },
  { text: "caption_regular", size: 12.8, weight: 400, top: 20, ls: 0.58 },
];
const textStyles = [
  ["MRP Title", "24/28"],
  ["MRP Subtitle", "20/32"],
  ["MRP Subtitle 2", "16/24"],
  ["MRP Title 2", "18/24"],
];

export default function App() {
  return (
    <Screen>
      <GlobalStyle />
      <TabStrip>
        <TabSearch>
          <Icon w={14} h={9} color="#e3e3e3" sw={2.4}><path d="M1.500 1.500L7 7l5.500-5.500" /></Icon>
        </TabSearch>
        {tabs.map((t, i) => (
          <React.Fragment key={i}>
            <Tab $active={t.active}>
              <Favicon>{t.icon}</Favicon>
              <TabTitle $active={t.active} $whole={t.whole}>{t.title}</TabTitle>
              <TabClose><CloseMark color={t.active ? "#e3e3e3" : "#c7c7c7"} /></TabClose>
            </Tab>
            <TabGap $line={i < 5} />
          </React.Fragment>
        ))}
        <NewTab><Icon w={16} color="#c7c7c7" sw={2}><path d="M8 0v16M0 8h16" /></Icon></NewTab>
        <WindowButtons>
          <div><Icon w={15} h={2} sw={2}><path d="M0 1h15" /></Icon></div>
          <div><Icon w={15} h={15} sw={1.8}><path d="M1 4h10v10H1zM4 4V1h10v10h-3" /></Icon></div>
          <div><Icon w={16} sw={1.8}><path d="M1 1l14 14M15 1L1 15" /></Icon></div>
        </WindowButtons>
      </TabStrip>
      <AddressRowBack>
        <AddressRow>
          <NavButton><Icon w={22} color="#c7c7c7" sw={2}><path d="M20 11H4M11.500 3L3.500 11l8 8" /></Icon></NavButton>
          <NavButton><Icon w={22} color="#7c7c7c" sw={2}><path d="M2 11h16M10.500 3l8 8-8 8" /></Icon></NavButton>
          <NavButton><Icon w={22} color="#c7c7c7" sw={2.2}><path d="M18.500 13.500A8 8 0 1117 5.500l1.500 2M19 2v6.500h-6.500" /></Icon></NavButton>
          <AddressField>
            <SiteInfo>
              <Icon w={19} h={18} color="#e3e3e3" sw={2}>
                <circle cx="4" cy="4" r="2.5" />
                <path d="M10 4h8M1 13.500h8" />
                <circle cx="15" cy="13.5" r="2.5" />
              </Icon>
            </SiteInfo>
            <Url><span>figma.com</span>/design/aAjLTBylIFthHzeESLdhWf/Ministry-of-Revenues-POS-Project-%7C-Portal---App?node-id=2-3&amp;p=f&amp;t=XC0okg85eyW06Ekf-0</Url>
            <Icon w={23} color="#c7c7c7" sw={1.9}><path d="M11.500 2.500l2.700 6.200 6.700.6-5.100 4.500 1.500 6.600-5.800-3.500-5.800 3.500 1.500-6.600L2.100 9.300l6.700-.6z" /></Icon>
          </AddressField>
          <ProfilePill><Avatar $size={30} $font={16} $family={CHROME}>F</Avatar>Work</ProfilePill>
          <Dots><i /><i /><i /></Dots>
        </AddressRow>
      </AddressRowBack>

      <Workspace>
        <LeftPanel>
          <FileHeader>
            <FileTools>
              <FigmaOutline />
              <Chevron />
              <Icon w={24} h={18}><rect x=".8" y=".8" width="22.4" height="16.4" rx="2" /><path d="M8.500 1v16" /></Icon>
            </FileTools>
            <FileName>Ministry of Revenues POS ... <Chevron /></FileName>
          </FileHeader>
          <PagesSection>
            <SectionTitle>
              Pages
              <Icon w={21}><circle cx="9" cy="9" r="8" /><path d="M14.500 14.500L20 20" /></Icon>
            </SectionTitle>
            <PageItem $top={18}>Cover</PageItem>
            <PageDivider />
            <PageItem $top={0} $selected>Design System and Components</PageItem>
            <PageDivider />
          </PagesSection>
          <LayersSection>
            <SectionTitle>Layers</SectionTitle>
            <LayerList>
              <LayerRow><AutoLayoutIcon />Frame 13</LayerRow>
              <LayerRow><FrameIcon />Samples</LayerRow>
              <LayerRow><FrameIcon />Components</LayerRow>
              <LayerRow><FrameIcon />Design System</LayerRow>
            </LayerList>
          </LayersSection>
        </LeftPanel>

        <Canvas>
          <FrameEdge />
          <Swatches>
            {swatches.map(([hex, name, label]) => (
              <Swatch key={hex}>
                <Disc $color={discColor[hex] || hex} $raised={hex === "#FFFFFF"} />
                <SwatchText>
                  <Hex>{label || hex}</Hex>
                  {name}
                </SwatchText>
              </Swatch>
            ))}
          </Swatches>
          <TypeColumn>
            {typeSamples.map((t) => (
              <TypeSample key={t.text} $top={t.top} $size={t.size} $weight={t.weight} $ls={t.ls} $link={t.link}>{t.text}</TypeSample>
            ))}
          </TypeColumn>
          <VThumb />
          <HThumb />
          <Toolbar>
            <Tool $active>
              <Icon w={27} h={27} strokeLinejoin="round">
                <path d="M2.300 1.200l21.500 9.200c1.500.7 1.400 2.700-.1 3.200l-7.700 2.500-3.200 8c-.6 1.500-2.600 1.400-3.100-.1L.9 2.700C.6 1.600 1.300.8 2.300 1.200z" />
              </Icon>
            </Tool>
            <Tool>
              <Icon w={28} h={32} strokeLinecap="round" strokeLinejoin="round">
                <path d="M7 15V5.500a1.900 1.900 0 013.800 0V13M10.800 12.500V3a1.900 1.900 0 013.800 0v9.500M14.600 12.500V3.500a1.900 1.900 0 013.800 0v9.500M18.400 13V7a1.900 1.900 0 013.800 0v12c0 6-3.500 9.800-9 9.800-4 0-6.300-1.500-8-5L1.300 17c-.6-1.200-.4-2.200.5-2.700 1-.5 2.100-.1 2.800.8L7 18.500V15" />
              </Icon>
            </Tool>
            <Tool>
              <Icon w={26} strokeLinejoin="round"><path d="M13 1a12 12 0 010 24H2.500a1.500 1.500 0 01-1.500-1.500V13A12 12 0 0113 1z" /></Icon>
            </Tool>
            <AskButton>Ask to edit</AskButton>
            <ToolbarDivider />
            <DevToggle>
              <DevKnob>
                <Icon w={26} h={22} strokeLinecap="round" strokeLinejoin="round"><path d="M6.500 5.500L1 11l5.500 5.500M19.500 5.500L25 11l-5.500 5.500M16 .8L10 21.200" /></Icon>
              </DevKnob>
            </DevToggle>
          </Toolbar>
        </Canvas>

        <RightPanel>
          <RightHeader>
            <UserRow>
              <UserMenu><Avatar $size={36} $font={19}>F</Avatar><Chevron /></UserMenu>
              <PlayMenu>
                <Icon w={19} h={22} strokeLinejoin="round"><path d="M1 2.500c0-1.300 1.300-2 2.400-1.300l13.700 8.500c1 .6 1 2 0 2.600L3.400 20.800C2.300 21.500 1 20.800 1 19.500z" /></Icon>
                <Chevron />
              </PlayMenu>
              <ShareButton>Share</ShareButton>
            </UserRow>
            <ModeRow>
              <Mode $width={110}>Comments</Mode>
              <Mode $width={108} $active>Properties</Mode>
              <Zoom>70% <Chevron /></Zoom>
            </ModeRow>
          </RightHeader>
          <PromoHeader>
            Get coding, faster
            <Icon w={17}><path d="M1 1l15 15M16 1L1 16" /></Icon>
          </PromoHeader>
          <PromoArt>
            <BorderBox>
              <CornerMarks width="326" height="182" fill="none" stroke="#e6e6e6" strokeWidth="1.5">
                <path d="M.8 27A26 26 0 0127 .8M299 .8A26 26 0 01325.200 27M325.200 155A26 26 0 01299 181.200M27 181.200A26 26 0 01.8 155" />
              </CornerMarks>
              <BoxCell $pad="0 6px 0 0">16</BoxCell>
              <EdgeLabel><span>Border</span><span>-</span></EdgeLabel>
              <BoxCell $pad="0 0 0 6px">16</BoxCell>
              <BoxCell $muted $pad="0 0 0 3px">-</BoxCell>
              <PaddingBox>
                <PaddingTop><span>Padding</span><b>16</b></PaddingTop>
                <PaddingMiddle>
                  <span>8</span>
                  <ContentBox>
                    <DashedOutline width="132" height="36" fill="none" stroke="#e6e6e6" strokeWidth="1.5" strokeDasharray="3 3">
                      <rect x=".75" y=".75" width="130.500" height="34.500" />
                    </DashedOutline>
                    344×100
                  </ContentBox>
                  <span>8</span>
                </PaddingMiddle>
                <BoxCell>16</BoxCell>
              </PaddingBox>
              <BoxCell $muted $pad="0 3px 0 0">-</BoxCell>
              <BoxCell $pad="0 6px 2px 0">16</BoxCell>
              <BoxCell>1</BoxCell>
              <BoxCell $pad="0 0 2px 6px">16</BoxCell>
            </BorderBox>
          </PromoArt>
          <Promo>
            <PromoText>Dev Mode simplifies handoff, speeds<br />up inspection, and integrates with tools<br />like VS Code and Storybook.</PromoText>
            <RequestButton>Request access</RequestButton>
          </Promo>
          <StylesSection>
            <StylesTitle $height={42}>Styles</StylesTitle>
            <StylesTitle $height={27}>Text styles</StylesTitle>
            {textStyles.map(([name, size]) => (
              <StyleRow key={name}><Ag>Ag</Ag><div>{name} <span>· {size}</span></div></StyleRow>
            ))}
          </StylesSection>
          <Help>
            <Icon w={14} h={23} strokeLinecap="round" sw={1.6}><path d="M1 6.500a6 6 0 1112 0c0 4.500-6 5-6 10M7 20.800v.6" /></Icon>
          </Help>
        </RightPanel>
      </Workspace>

      <Taskbar>
        <SystemItem $width={72}>
          <svg width="25" height="25" viewBox="0 0 25 25" fill="#fff"><path d="M0 3.400L10 2v9.800H0zM11 1.900L25 0v11.800H11zM0 12.900h10v9.800L0 21.300zM11 12.900h14V25l-14-2z" /></svg>
        </SystemItem>
        <SystemItem $width={71}>
          <Icon w={34} h={34} sw={2.6}><circle cx="20" cy="13.5" r="12.2" /><path d="M11.500 22.500L1.500 32.500" /></Icon>
        </SystemItem>
        <SystemItem $width={73}>
          <Icon w={25} h={24}>
            <path d="M1 0v3.200h15V0M1 24v-3.200h15V24M1 6.500h15v11H1zM22.500 0v5.500M22.500 11v13" />
            <path d="M21 6.500h3v3h-3z" fill="#fff" stroke="none" />
          </Icon>
        </SystemItem>
        <SystemItem $width={3} />
        <AppItem><CopilotLogo /></AppItem>
        <AppItem><StoreLogo /></AppItem>
        <AppItem $open><EdgeLogo /></AppItem>
        <AppItem><OutlookLogo /></AppItem>
        <AppItem $open><ExplorerLogo /></AppItem>
        <AppItem><DockerMark><FaDocker size={26} color="#fff" /></DockerMark></AppItem>
        <AppItem><PostgresLogo /></AppItem>
        <AppItem $open $active>
          <ChromeLogo />
          <ChromeBadge><Avatar $size={24} $font={13}>F</Avatar></ChromeBadge>
        </AppItem>
        <AppItem $open><CursorLogo /></AppItem>
        <Tray>
          <TrayIcon><Icon w={18} h={10}><path d="M.5 9.500L9 1l8.500 8.500" /></Icon></TrayIcon>
          <TrayIcon>
            <Icon w={18} h={22} sw={1.4}><rect x="1.5" y="5" width="10" height="12" rx="2" /><path d="M12 9.500l4.500-3v9l-4.500-3M2 2.500C5 .8 10 .8 14 2.500M2 19.500c3 1.700 8 1.700 12 0" /></Icon>
          </TrayIcon>
          <TrayIcon>
            <Icon w={25} h={18} sw={1.3}>
              <path d="M8.500 4.600H22v11H5V11" />
              <path d="M8.500 6.500h11.800v7.200H7V11z" fill="#fff" stroke="none" />
              <path d="M23.500 8v4.500M2 0v3M5.500 0v3M.7 3.300h6v2.500a3 3 0 01-6 0zM3.700 9v6.600H6" />
            </Icon>
          </TrayIcon>
          <TrayIcon>
            <Icon w={19} h={19} sw={1.4}>
              <path d="M1 18.500A17.500 17.500 0 0118.500 1" opacity=".45" />
              <path d="M5.500 18.500A13 13 0 0118.500 5.500" opacity=".8" />
              <path d="M10 18.500a8.500 8.500 0 018.500-8.500M14 18.500a4.500 4.500 0 014.500-4.500" />
              <circle cx="17" cy="17" r="1.3" fill="#fff" stroke="none" />
            </Icon>
          </TrayIcon>
          <TrayIcon>
            <svg width="24" height="16" viewBox="0 0 24 16">
              <path d="M6 7a6.500 6.500 0 0112-2.500l-4 4z" fill="#8f8f8a" />
              <path d="M4.500 15.500a4.500 4.500 0 01.5-9c2-2.500 6-2.500 8 0l5 5-6 4z" fill="#c9c9c6" />
              <path d="M6 15.500L18 5.500a5 5 0 01.5 10z" fill="#fff" />
            </svg>
          </TrayIcon>
          <TrayIcon $width={32}><Icon w={21} h={18} sw={1.4}><path d="M1 6h3l5.500-5v16L4 12H1zM13 5.500l7 7M20 5.500l-7 7" /></Icon></TrayIcon>
          <Clock>8:40 PM<br />7/18/2025</Clock>
          <Notifications>
            <svg width="24" height="23" viewBox="0 0 24 23">
              <path d="M0 0h24v19H9l-4 4v-4H0z" fill="#fff" />
              <path d="M5 5.500h14M5 9.500h14M5 13.500h8" stroke="#2c2b26" strokeWidth="1.3" />
            </svg>
            <Count>29</Count>
          </Notifications>
          <PeekLine />
        </Tray>
      </Taskbar>
    </Screen>
  );
}
